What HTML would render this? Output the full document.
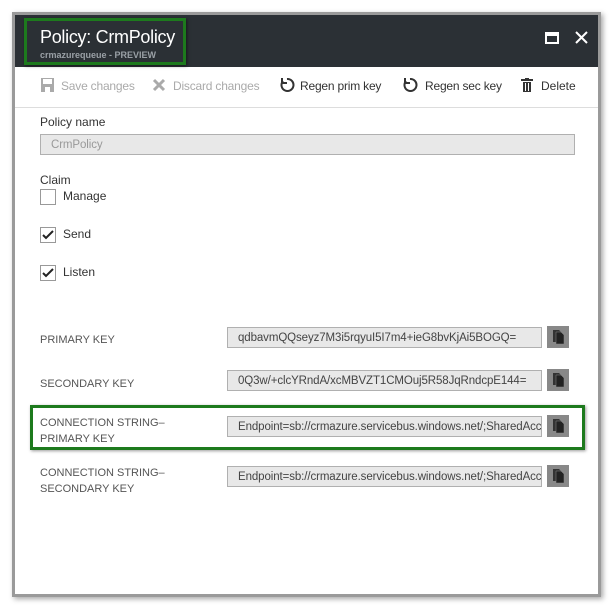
<!DOCTYPE html>
<html><head><style>
*{margin:0;padding:0;box-sizing:border-box}
body{width:611px;height:606px;background:#fff;position:relative;overflow:hidden;font-family:"Liberation Sans",sans-serif;color:#333}
.a{position:absolute}
.panel{left:12px;top:12px;width:589px;height:585px;border:3px solid #9a9a9a;background:#fff;box-shadow:2px 2px 5px rgba(0,0,0,.35)}
.hdr{left:15px;top:15px;width:583px;height:52px;background:#2b3035}
.t{font-size:12px;white-space:nowrap}
.inp{background:#e8e8e8;border:1px solid #b0b0b0;height:21px;font-size:11.5px;color:#444;padding:4px 10px;white-space:nowrap;overflow:hidden;letter-spacing:-0.1px}
.cp{width:22px;height:22px;background:#888}
.cb{width:16px;height:16px;border:1px solid #999;background:#fff}
.lbl{font-size:11px;color:#555;line-height:16px}
.green{border:3px solid #1d7a1d}
</style></head><body>
<div class="a panel"></div>
<div class="a hdr"></div>
<div class="a green" style="left:24px;top:18px;width:162px;height:47px;box-shadow:1px 1px 3px rgba(0,0,0,.5)"></div>
<div class="a" style="left:40px;top:27px;font-size:18px;letter-spacing:-0.3px;color:#fff">Policy: CrmPolicy</div>
<div class="a" style="left:40px;top:50px;font-size:9px;font-weight:bold;color:#9aa0a6">crmazurequeue - PREVIEW</div>
<div class="a" style="left:545px;top:32px;width:14px;height:12px;border:2px solid #fff;border-top-width:4px"></div>
<svg class="a" style="left:575px;top:31px" width="13" height="13"><path d="M1 1L12 12M12 1L1 12" stroke="#fff" stroke-width="2"/></svg>

<svg class="a" style="left:40px;top:77px" width="15" height="16"><path d="M1 1h13v14H1z" fill="#aaa"/><rect x="3" y="2" width="9" height="5" fill="#fff"/><rect x="5" y="10" width="5" height="5" fill="#fff"/></svg>
<div class="a t" style="left:61px;top:79px;color:#aaa;letter-spacing:-0.2px">Save changes</div>
<svg class="a" style="left:152px;top:78px" width="14" height="14"><path d="M2 2L12 12M12 2L2 12" stroke="#aaa" stroke-width="3"/></svg>
<div class="a t" style="left:173px;top:79px;color:#aaa;letter-spacing:-0.2px">Discard changes</div>
<svg class="a" style="left:279px;top:77px" width="16" height="16"><path d="M4 4A6 6 0 1 0 8 2" fill="none" stroke="#333" stroke-width="2"/><path d="M3 1v5h5" fill="none" stroke="#333" stroke-width="2"/></svg>
<div class="a t" style="left:300px;top:79px;letter-spacing:-0.2px">Regen prim key</div>
<svg class="a" style="left:402px;top:77px" width="16" height="16"><path d="M4 4A6 6 0 1 0 8 2" fill="none" stroke="#333" stroke-width="2"/><path d="M3 1v5h5" fill="none" stroke="#333" stroke-width="2"/></svg>
<div class="a t" style="left:425px;top:79px;letter-spacing:-0.2px">Regen sec key</div>
<svg class="a" style="left:521px;top:78px" width="12" height="14"><path d="M0 2h12M4 0h4" stroke="#333" stroke-width="2"/><path d="M2 4h8v10H2z" fill="#333"/><path d="M4.5 5v8M7.5 5v8" stroke="#fff"/></svg>
<div class="a t" style="left:541px;top:79px">Delete</div>
<div class="a" style="left:15px;top:107px;width:583px;height:1px;background:#ddd"></div>

<div class="a t" style="left:40px;top:115px">Policy name</div>
<div class="a inp" style="left:40px;top:134px;width:535px;color:#999">CrmPolicy</div>
<div class="a t" style="left:40px;top:173px">Claim</div>
<div class="a cb" style="left:40px;top:189px"></div>
<div class="a t" style="left:63px;top:189px">Manage</div>
<div class="a cb" style="left:40px;top:227px"></div>
<svg class="a" style="left:42px;top:230px" width="12" height="10"><path d="M1 5l3 3 7-7" fill="none" stroke="#222" stroke-width="2"/></svg>
<div class="a t" style="left:63px;top:227px">Send</div>
<div class="a cb" style="left:40px;top:265px"></div>
<svg class="a" style="left:42px;top:268px" width="12" height="10"><path d="M1 5l3 3 7-7" fill="none" stroke="#222" stroke-width="2"/></svg>
<div class="a t" style="left:63px;top:265px">Listen</div>

<div class="a lbl" style="left:40px;top:332px">PRIMARY KEY</div>
<div class="a inp" style="left:227px;top:327px;width:315px">qdbavmQQseyz7M3i5rqyuI5I7m4+ieG8bvKjAi5BOGQ=</div>
<div class="a lbl" style="left:40px;top:376px">SECONDARY KEY</div>
<div class="a inp" style="left:227px;top:370px;width:315px">0Q3w/+clcYRndA/xcMBVZT1CMOuj5R58JqRndcpE144=</div>
<div class="a green" style="left:30px;top:405px;width:555px;height:45px;box-shadow:1px 1px 3px rgba(0,0,0,.4)"></div>
<div class="a lbl" style="left:40px;top:415px">CONNECTION STRING–<br>PRIMARY KEY</div>
<div class="a inp" style="left:227px;top:416px;width:315px">Endpoint=sb://crmazure.servicebus.windows.net/;SharedAccessKeyName</div>
<div class="a lbl" style="left:40px;top:465px">CONNECTION STRING–<br>SECONDARY KEY</div>
<div class="a inp" style="left:227px;top:466px;width:315px">Endpoint=sb://crmazure.servicebus.windows.net/;SharedAccessKeyName</div>

<div class="a cp" style="left:547px;top:326px"></div>
<div class="a cp" style="left:547px;top:369px"></div>
<div class="a cp" style="left:547px;top:415px"></div>
<div class="a cp" style="left:547px;top:465px"></div>
<svg class="a" style="left:551px;top:329px" width="14" height="16"><path d="M2 1h6l3 3v9H2z" fill="#333"/><path d="M5 3h5l3 3v9H5z" fill="#222" stroke="#888" stroke-width=".5"/></svg>
<svg class="a" style="left:551px;top:372px" width="14" height="16"><path d="M2 1h6l3 3v9H2z" fill="#333"/><path d="M5 3h5l3 3v9H5z" fill="#222" stroke="#888" stroke-width=".5"/></svg>
<svg class="a" style="left:551px;top:418px" width="14" height="16"><path d="M2 1h6l3 3v9H2z" fill="#333"/><path d="M5 3h5l3 3v9H5z" fill="#222" stroke="#888" stroke-width=".5"/></svg>
<svg class="a" style="left:551px;top:468px" width="14" height="16"><path d="M2 1h6l3 3v9H2z" fill="#333"/><path d="M5 3h5l3 3v9H5z" fill="#222" stroke="#888" stroke-width=".5"/></svg>
</body></html>
